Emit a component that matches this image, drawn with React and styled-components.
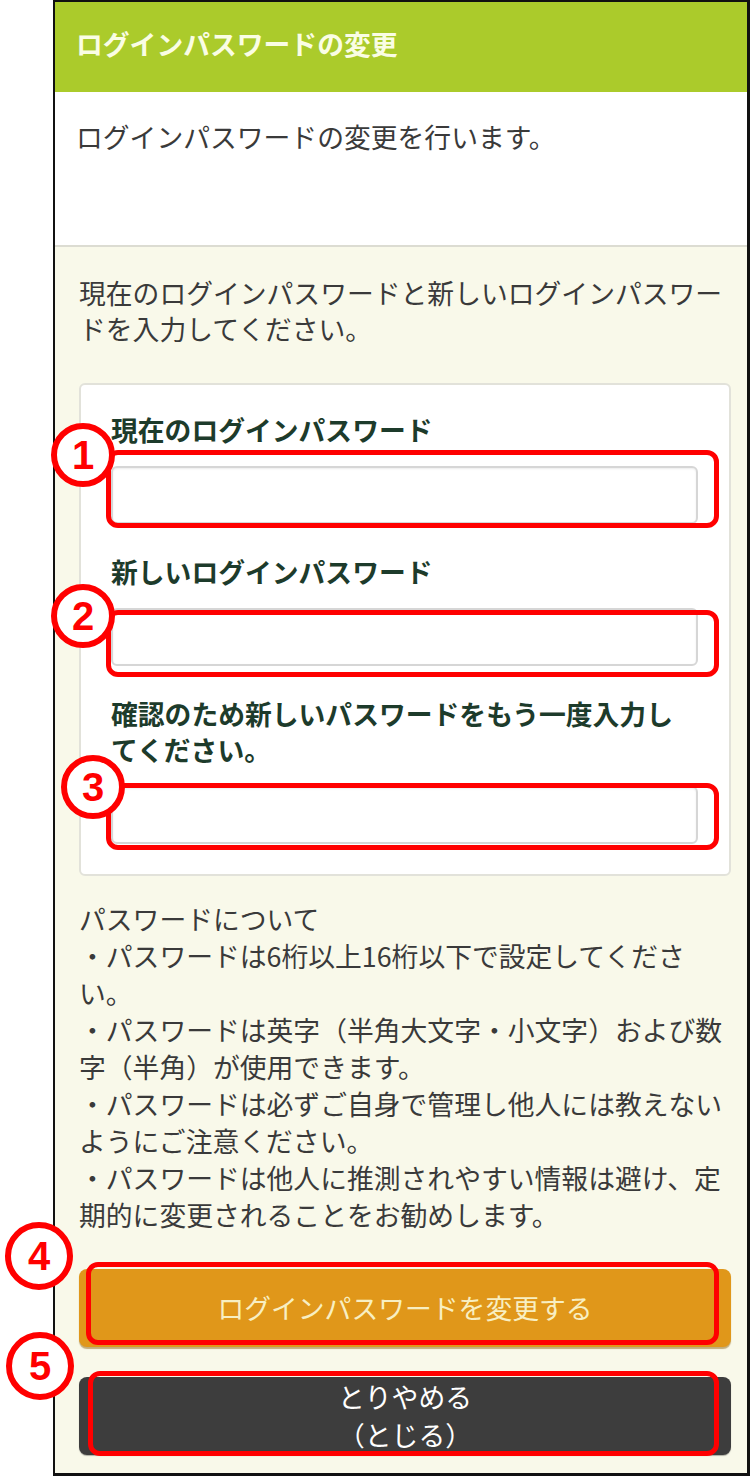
import React from 'react'
import styled, { createGlobalStyle } from 'styled-components'

const GlobalStyle = createGlobalStyle`
  html, body {
    margin: 0;
    padding: 0;
    background: #ffffff;
  }
  body {
    font-family: "Noto Sans CJK JP", "Noto Sans", sans-serif;
    color: #333333;
  }
  * {
    box-sizing: border-box;
  }
`

const JP_SIZE = '26.8px'

const Page = styled.div`
  width: 750px;
  padding-left: 53px;
`

const Panel = styled.div`
  width: 697px;
  border-top: 2px solid #111111;
  border-left: 2px solid #111111;
  border-right: 3px solid #111111;
  border-bottom: 3px solid #111111;
  background: #f9f9ea;
`

const Header = styled.div`
  height: 90px;
  padding: 24px 0 0 21px;
  background: #abcb2b;
`

const Title = styled.h1`
  margin: 0;
  font-size: ${JP_SIZE};
  line-height: 36px;
  font-weight: 700;
  color: #fafde4;
`

const Lead = styled.div`
  height: 155px;
  padding: 27px 0 0 21px;
  background: #ffffff;
  border-bottom: 2px solid #dcdcd2;
`

const Text = styled.p`
  margin: 0;
  font-size: ${JP_SIZE};
  line-height: ${(p) => p.$lh || 36}px;
  color: #3a3a3a;
`

const Body = styled.div`
  padding: 28px 16px 18px 24px;
`

const Card = styled.div`
  margin-top: 36px;
  padding: 27px 31px 30px 30px;
  background: #ffffff;
  border: 2px solid #e2e2da;
  border-radius: 6px;
`

const Field = styled.div`
  & + & {
    margin-top: 30px;
  }
`

const Label = styled.label`
  display: block;
  font-size: ${JP_SIZE};
  line-height: 36px;
  font-weight: 700;
  color: #1d3b2b;
`

const Annotated = styled.div`
  position: relative;
  margin-top: ${(p) => p.$mt || 0}px;
`

const Input = styled.input`
  display: block;
  width: 100%;
  height: 58px;
  border: 2px solid #d6d6d6;
  border-radius: 6px;
  background: #ffffff;
  box-shadow: inset 0 1px 2px rgba(0, 0, 0, 0.08);
  font-size: 22px;
  outline: none;
`

const RedFrame = styled.div`
  position: absolute;
  top: ${(p) => p.$box[0]}px;
  right: ${(p) => p.$box[1]}px;
  bottom: ${(p) => p.$box[2]}px;
  left: ${(p) => p.$box[3]}px;
  border: 5px solid #ff0000;
  border-radius: 12px;
  pointer-events: none;
`

const Badge = styled.div`
  position: absolute;
  top: ${(p) => p.$y}px;
  left: ${(p) => p.$x}px;
  width: ${(p) => p.$size}px;
  height: ${(p) => p.$size}px;
  display: flex;
  align-items: center;
  justify-content: center;
  border: 6px solid #ff0000;
  border-radius: 50%;
  background: #ffffff;
  font-family: "Liberation Sans", Arial, sans-serif;
  font-weight: 700;
  font-size: 40px;
  line-height: 1;
  color: #ff0000;
`

const Notes = styled.div`
  margin-top: 24px;
`

const Button = styled.button`
  display: flex;
  flex-direction: column;
  align-items: center;
  justify-content: center;
  width: 100%;
  height: 78px;
  padding: 0;
  border: none;
  border-radius: 8px;
  font-family: inherit;
  font-size: ${JP_SIZE};
  background: ${(p) => (p.$variant === 'primary' ? '#e0971a' : '#3d3d3d')};
  color: ${(p) => (p.$variant === 'primary' ? '#f8efc2' : '#ffffff')};
  box-shadow: ${(p) =>
    p.$variant === 'primary'
      ? '0 2px 1px rgba(150, 110, 30, 0.55)'
      : '0 1px 1px rgba(0, 0, 0, 0.3)'};
`

const ButtonLine = styled.span`
  display: block;
  line-height: 38px;
`

const Marker = ({ n, frame, badge }) => (
  <>
    <RedFrame $box={frame} />
    <Badge $x={badge[0]} $y={badge[1]} $size={badge[2]}>
      {n}
    </Badge>
  </>
)

const fields = [
  {
    label: '現在のログインパスワード',
    frame: [-16, -21, -4, -5],
    badge: [-60, -43, 64],
  },
  {
    label: '新しいログインパスワード',
    frame: [2, -21, -11, -5],
    badge: [-60, -24, 64],
  },
  {
    label: '確認のため新しいパスワードをもう一度入力してください。',
    frame: [-3, -21, -6, -5],
    badge: [-50, -31, 64],
  },
]

const notes = [
  'パスワードについて',
  '・パスワードは6桁以上16桁以下で設定してください。',
  '・パスワードは英字（半角大文字・小文字）および数字（半角）が使用できます。',
  '・パスワードは必ずご自身で管理し他人には教えないようにご注意ください。',
  '・パスワードは他人に推測されやすい情報は避け、定期的に変更されることをお勧めします。',
]

export default function App() {
  return (
    <Page>
      <GlobalStyle />
      <Panel>
        <Header>
          <Title>ログインパスワードの変更</Title>
        </Header>
        <Lead>
          <Text>ログインパスワードの変更を行います。</Text>
        </Lead>
        <Body>
          <Text>
            現在のログインパスワードと新しいログインパスワードを入力してください。
          </Text>
          <Card>
            {fields.map((f, i) => (
              <Field key={f.label}>
                <Label>{f.label}</Label>
                <Annotated $mt={18}>
                  <Input type="password" />
                  <Marker n={i + 1} frame={f.frame} badge={f.badge} />
                </Annotated>
              </Field>
            ))}
          </Card>
          <Notes>
            {notes.map((line) => (
              <Text key={line} $lh={37}>
                {line}
              </Text>
            ))}
          </Notes>
          <Annotated $mt={36}>
            <Button $variant="primary">
              <ButtonLine>ログインパスワードを変更する</ButtonLine>
            </Button>
            <Marker n={4} frame={[-7, 12, 2, 7]} badge={[-74, -47, 68]} />
          </Annotated>
          <Annotated $mt={30}>
            <Button $variant="dark">
              <ButtonLine>とりやめる</ButtonLine>
              <ButtonLine>（とじる）</ButtonLine>
            </Button>
            <Marker n={5} frame={[-6, 12, -1, 9]} badge={[-73, -45, 68]} />
          </Annotated>
        </Body>
      </Panel>
    </Page>
  )
}
